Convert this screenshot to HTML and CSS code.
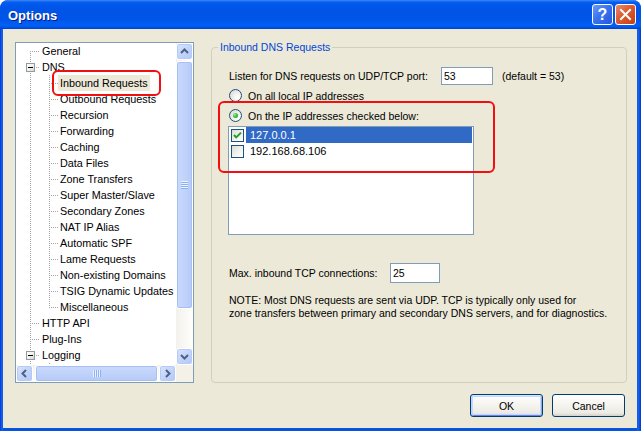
FILE: index.html
```html
<!DOCTYPE html>
<html>
<head>
<meta charset="utf-8">
<link rel="stylesheet" href="styles.css">
</head>
<body>
<div class="window">
  <div class="titlebar">
    <span class="title">Options</span>
    <div class="caption-btns">
      <div class="cap help">?</div>
      <div class="cap close">
        <svg width="19" height="19" viewBox="0 0 19 19"><path d="M5 5 L14 14 M14 5 L5 14" stroke="#fff" stroke-width="2" stroke-linecap="square"/></svg>
      </div>
    </div>
  </div>
  <div class="client">
    <div class="main">
      <div class="tree">
        <div class="tree-content">
          <div class="row"><span class="g0 first"></span><span class="label">General</span></div>
          <div class="row"><span class="g0 boxrow"><span class="tbox"></span></span><span class="label">DNS</span></div>
          <div class="row"><span class="g0 pass"></span><span class="g1 mid"></span><span class="label sel">Inbound Requests</span></div>
          <div class="row"><span class="g0 pass"></span><span class="g1 mid"></span><span class="label">Outbound Requests</span></div>
          <div class="row"><span class="g0 pass"></span><span class="g1 mid"></span><span class="label">Recursion</span></div>
          <div class="row"><span class="g0 pass"></span><span class="g1 mid"></span><span class="label">Forwarding</span></div>
          <div class="row"><span class="g0 pass"></span><span class="g1 mid"></span><span class="label">Caching</span></div>
          <div class="row"><span class="g0 pass"></span><span class="g1 mid"></span><span class="label">Data Files</span></div>
          <div class="row"><span class="g0 pass"></span><span class="g1 mid"></span><span class="label">Zone Transfers</span></div>
          <div class="row"><span class="g0 pass"></span><span class="g1 mid"></span><span class="label">Super Master/Slave</span></div>
          <div class="row"><span class="g0 pass"></span><span class="g1 mid"></span><span class="label">Secondary Zones</span></div>
          <div class="row"><span class="g0 pass"></span><span class="g1 mid"></span><span class="label">NAT IP Alias</span></div>
          <div class="row"><span class="g0 pass"></span><span class="g1 mid"></span><span class="label">Automatic SPF</span></div>
          <div class="row"><span class="g0 pass"></span><span class="g1 mid"></span><span class="label">Lame Requests</span></div>
          <div class="row"><span class="g0 pass"></span><span class="g1 mid"></span><span class="label">Non-existing Domains</span></div>
          <div class="row"><span class="g0 pass"></span><span class="g1 mid"></span><span class="label">TSIG Dynamic Updates</span></div>
          <div class="row"><span class="g0 pass"></span><span class="g1 last"></span><span class="label">Miscellaneous</span></div>
          <div class="row"><span class="g0 mid"></span><span class="label">HTTP API</span></div>
          <div class="row"><span class="g0 mid"></span><span class="label">Plug-Ins</span></div>
          <div class="row"><span class="g0 boxrow"><span class="tbox"></span></span><span class="label">Logging</span></div>
          <div class="row"><span class="g0 pass"></span><span class="g1 mid"></span></div>
          <div class="annot annot-tree"></div>
        </div>
        <div class="vbar">
          <div class="sbtn">
            <svg width="15" height="15" viewBox="0 0 15 15"><path d="M4 9 L7.5 5.5 L11 9" fill="none" stroke="#4D6185" stroke-width="2"/></svg>
          </div>
          <div class="vthumb"><span class="grip-v"></span></div>
          <div class="spacer"></div>
          <div class="sbtn">
            <svg width="15" height="15" viewBox="0 0 15 15"><path d="M4 6 L7.5 9.5 L11 6" fill="none" stroke="#4D6185" stroke-width="2"/></svg>
          </div>
        </div>
        <div class="hbar">
          <div class="sbtn">
            <svg width="15" height="15" viewBox="0 0 15 15"><path d="M9 4 L5.5 7.5 L9 11" fill="none" stroke="#4D6185" stroke-width="2"/></svg>
          </div>
          <div class="hthumb"><span class="grip-h"></span></div>
          <div class="spacer"></div>
          <div class="sbtn">
            <svg width="15" height="15" viewBox="0 0 15 15"><path d="M6 4 L9.5 7.5 L6 11" fill="none" stroke="#4D6185" stroke-width="2"/></svg>
          </div>
        </div>
        <div class="corner"></div>
      </div>

      <div class="group">
        <span class="legend">Inbound DNS Requests</span>
        <div class="listen-row">
          <span class="listen-label">Listen for DNS requests on UDP/TCP port:</span>
          <div class="edit port">53</div>
          <span class="hint">(default = 53)</span>
        </div>
        <div class="radio-row r1"><span class="radio"></span><span>On all local IP addresses</span></div>
        <div class="radio-row r2"><span class="radio on"></span><span>On the IP addresses checked below:</span></div>
        <div class="listbox">
          <div class="lrow"><span class="check on"><svg width="11" height="11" viewBox="0 0 11 11"><path d="M2 5 L4.2 7.4 L9 2.6" fill="none" stroke="#21A121" stroke-width="2"/></svg></span><span class="ltext sel">127.0.0.1</span></div>
          <div class="lrow"><span class="check"></span><span class="ltext">192.168.68.106</span></div>
        </div>
        <div class="max-row">
          <span class="max-label">Max. inbound TCP connections:</span>
          <div class="edit maxconn">25</div>
        </div>
        <p class="note">NOTE: Most DNS requests are sent via UDP. TCP is typically only used for<br>zone transfers between primary and secondary DNS servers, and for diagnostics.</p>
        <div class="annot annot-group"></div>
      </div>
    </div>
    <div class="buttons">
      <div class="btn default">OK</div>
      <div class="btn">Cancel</div>
    </div>
  </div>
</div>
</body>
</html>
```

FILE: styles.css
```css
html, body {
  margin: 0;
  padding: 0;
  background: #ffffff;
}
body {
  font-family: "Liberation Sans", Arial, sans-serif;
  font-size: 10.5px;
  color: #000;
}
.window {
  width: 641px;
  height: 431px;
  box-sizing: border-box;
  background: linear-gradient(to right, #0831D9 0, #166AEE 2px, #0855DD 3px, #0855DD 637px, #166AEE 638px, #0831D9 641px);
  border-radius: 8px 8px 0 0;
  display: flex;
  flex-direction: column;
  overflow: hidden;
}
.titlebar {
  height: 29px;
  flex: none;
  display: flex;
  align-items: center;
  padding: 0 5px 0 8px;
  background: linear-gradient(to bottom, #3C8CF8 0, #0A5FEF 2px, #0058EE 4px, #0054E6 10px, #0055E8 20px, #0060F6 25px, #0058EA 27px, #003DD1 29px);
  border-radius: 8px 8px 0 0;
}
.title {
  color: #fff;
  font-weight: bold;
  font-size: 13px;
  text-shadow: 1px 1px 0 #0A1C8A;
  margin-top: 1px;
}
.caption-btns {
  margin-left: auto;
  display: flex;
  gap: 2px;
}
.cap {
  width: 21px;
  height: 21px;
  box-sizing: border-box;
  border: 1px solid #fff;
  border-radius: 3px;
  display: flex;
  align-items: center;
  justify-content: center;
  color: #fff;
}
.help {
  background: linear-gradient(135deg, #6F9BF8 0%, #3A73EE 45%, #2359DE 100%);
  font-weight: bold;
  font-size: 16px;
  font-family: "Liberation Sans", Arial, sans-serif;
}
.close {
  background: linear-gradient(135deg, #E98B6B 0%, #DD5A30 45%, #C73E14 100%);
}
.client {
  flex: 1;
  margin: 0 4px 3px 3px;
  background: #ECE9D8;
  padding: 13px 10px 0 12px;
  display: flex;
  flex-direction: column;
}
.main {
  display: flex;
  gap: 17px;
  height: 341px;
}

/* Tree */
.tree {
  width: 179px;
  height: 341px;
  box-sizing: border-box;
  border: 1px solid #7F9DB9;
  background: #fff;
  display: grid;
  grid-template-columns: 160px 17px;
  grid-template-rows: 322px 17px;
  flex: none;
}
.tree-content {
  position: relative;
  overflow: hidden;
}
.row {
  display: flex;
  height: 16px;
  align-items: center;
}
.g0, .g1 {
  flex: none;
  height: 16px;
  display: flex;
  align-items: center;
  --vd: repeating-linear-gradient(to bottom, #A5A5A5 0 1px, transparent 1px 2px);
  --hd: repeating-linear-gradient(to right, #A5A5A5 0 1px, transparent 1px 2px);
}
.g0 { width: 24px; }
.g1 { width: 18px; }
.g0.first {
  background: var(--hd) 16px 8px / 8px 1px no-repeat, var(--vd) 14px 8px / 1px 8px no-repeat;
}
.g0.mid, .g0.boxrow {
  background: var(--hd) 16px 8px / 8px 1px no-repeat, var(--vd) 14px 0 / 1px 16px no-repeat;
}
.g0.pass {
  background: var(--vd) 14px 0 / 1px 16px no-repeat;
}
.g1.mid {
  background: var(--hd) 11px 8px / 7px 1px no-repeat, var(--vd) 9px 0 / 1px 16px no-repeat;
}
.g1.last {
  background: var(--hd) 11px 8px / 7px 1px no-repeat, var(--vd) 9px 0 / 1px 9px no-repeat;
}
.tbox {
  width: 9px;
  height: 9px;
  box-sizing: border-box;
  margin-left: 10px;
  margin-top: 1px;
  border: 1px solid #8C9DA9;
  background: linear-gradient(-45deg, #D6D3C6 0%, #F2F1EC 50%, #ffffff 100%);
  display: flex;
  align-items: center;
  justify-content: center;
}
.tbox::after {
  content: "";
  width: 5px;
  height: 1px;
  background: #000;
}
.label {
  line-height: 16px;
  padding: 0 2px;
  white-space: nowrap;
  font-size: 10.8px;
}
.label.sel {
  background: #ECE9D8;
}
.annot {
  position: absolute;
  border: 2px solid #F20F0F;
  border-radius: 6px;
  box-sizing: border-box;
  pointer-events: none;
}
.annot-tree {
  left: 36px;
  top: 27px;
  width: 109px;
  height: 26px;
}

/* Scrollbars */
.vbar {
  display: flex;
  flex-direction: column;
  background: linear-gradient(to right, #F3F1EC, #FEFEFB);
}
.hbar {
  display: flex;
  background: linear-gradient(to bottom, #F3F1EC, #FEFEFB);
}
.corner {
  background: #F3F1E8;
}
.spacer { flex: 1; }
.sbtn {
  width: 17px;
  height: 17px;
  box-sizing: border-box;
  border: 1px solid #fff;
  border-radius: 3px;
  background: linear-gradient(135deg, #D9E5FD 0%, #C3D4FB 50%, #B3C8F6 100%);
  box-shadow: inset 0 0 0 1px #B7CAF5;
  display: flex;
  align-items: center;
  justify-content: center;
  flex: none;
}
.vthumb {
  margin-top: 1px;
  height: 248px;
  box-sizing: border-box;
  border: 1px solid #fff;
  border-radius: 3px;
  background: linear-gradient(to right, #CAD9FD 0%, #C1D3FB 50%, #B6CAF8 100%);
  box-shadow: inset 0 0 0 1px #A9BFF3;
  display: flex;
  align-items: center;
  justify-content: center;
}
.grip-v {
  width: 7px;
  height: 8px;
  background: repeating-linear-gradient(to bottom, #EEF4FE 0 1px, #8CB0F8 1px 2px);
}
.hthumb {
  margin-left: 2px;
  width: 123px;
  box-sizing: border-box;
  border: 1px solid #fff;
  border-radius: 3px;
  background: linear-gradient(to bottom, #CAD9FD 0%, #C1D3FB 50%, #B6CAF8 100%);
  box-shadow: inset 0 0 0 1px #A9BFF3;
  display: flex;
  align-items: center;
  justify-content: center;
}
.grip-h {
  width: 8px;
  height: 7px;
  background: repeating-linear-gradient(to right, #EEF4FE 0 1px, #8CB0F8 1px 2px);
}

/* Group box */
.group {
  position: relative;
  width: 416px;
  height: 336px;
  margin-top: 5px;
  box-sizing: border-box;
  border: 1px solid #D0D0BF;
  border-radius: 4px;
  padding: 0 0 0 17px;
}
.legend {
  position: absolute;
  top: -7px;
  left: 6px;
  padding: 0 2px;
  line-height: 13px;
  background: #ECE9D8;
  color: #0046D5;
}
.listen-row {
  margin-top: 19px;
  height: 18px;
  display: flex;
  align-items: center;
}
.listen-label {
  width: 212px;
  flex: none;
}
.edit {
  box-sizing: border-box;
  border: 1px solid #7F9DB9;
  background: #fff;
  padding-left: 2px;
  display: flex;
  align-items: center;
  flex: none;
}
.port {
  width: 52px;
  height: 18px;
}
.hint {
  margin-left: 9px;
}
.radio-row {
  display: flex;
  align-items: center;
  height: 13px;
}
.r1 { margin-top: 4px; }
.r2 { margin-top: 7px; }
.radio {
  width: 13px;
  height: 13px;
  box-sizing: border-box;
  border-radius: 50%;
  border: 1px solid #1C5180;
  background: radial-gradient(circle at 70% 70%, #ffffff 0%, #F2F1EB 40%, #D4D2C8 100%);
  margin-right: 6px;
  display: flex;
  align-items: center;
  justify-content: center;
  flex: none;
}
.radio.on::after {
  content: "";
  width: 5px;
  height: 5px;
  border-radius: 50%;
  background: radial-gradient(circle at 35% 35%, #A8EBA8 0%, #3BC03B 45%, #21A121 100%);
}
.listbox {
  margin-top: 4px;
  margin-left: -1px;
  width: 246px;
  height: 109px;
  box-sizing: border-box;
  border: 1px solid #7F9DB9;
  background: #fff;
}
.lrow {
  height: 16px;
  display: flex;
  align-items: center;
}
.check {
  width: 13px;
  height: 13px;
  box-sizing: border-box;
  border: 1px solid #1C5180;
  background: linear-gradient(135deg, #DCDCD7 0%, #F4F4F1 60%, #ffffff 100%);
  margin-left: 2px;
  margin-top: 1px;
  flex: none;
  display: flex;
  align-items: center;
  justify-content: center;
}
.ltext {
  flex: 1;
  margin: 0 1px 0 2px;
  padding-left: 4px;
  line-height: 16px;
  font-size: 11px;
}
.ltext.sel {
  background: #316AC5;
  color: #fff;
}
.max-row {
  margin-top: 28px;
  display: flex;
  align-items: center;
  height: 20px;
}
.max-label {
  width: 161px;
  flex: none;
}
.maxconn {
  width: 50px;
  height: 20px;
}
.note {
  margin: 11px 0 0 0;
  line-height: 13px;
}
.annot-group {
  left: 6px;
  top: 53px;
  width: 277px;
  height: 72px;
}

/* Buttons */
.buttons {
  display: flex;
  justify-content: flex-end;
  gap: 9px;
  margin-top: 11px;
  padding-right: 2px;
}
.btn {
  width: 73px;
  height: 23px;
  box-sizing: border-box;
  border: 1px solid #003C74;
  border-radius: 3px;
  background: linear-gradient(to bottom, #FFFFFF 0%, #F4F3EE 50%, #ECEBE6 85%, #D6D0C5 100%);
  display: flex;
  align-items: center;
  justify-content: center;
}
.btn.default {
  box-shadow: inset 0 1px 0 #CEE7FF, inset 1px 0 0 #BCD4F6, inset -1px 0 0 #89ADE4, inset 0 -1px 0 #6982EE, inset 0 0 0 2px #C4D8F8;
}
```
